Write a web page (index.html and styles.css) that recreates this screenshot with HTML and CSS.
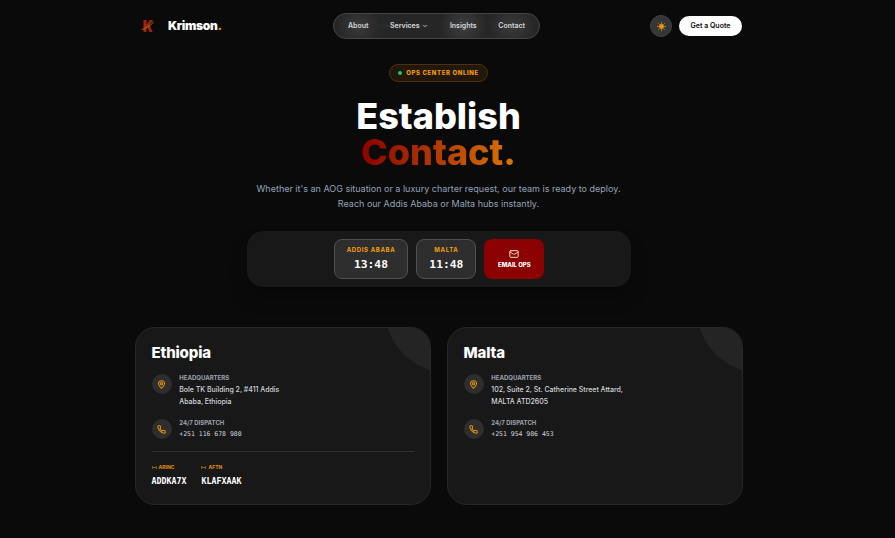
FILE: index.html
```
<!DOCTYPE html>
<html lang="en">

<head>
    <meta charset="UTF-8">
    <title>Krimson | Contact</title>
    <link rel="stylesheet" href="styles.css">
</head>

<body>
    <svg class="sprite" aria-hidden="true">
        <symbol id="pin" viewBox="0 0 24 24">
            <path d="M20 10c0 6-8 12-8 12s-8-6-8-12a8 8 0 0 1 16 0Z" />
            <circle cx="12" cy="10" r="3" />
        </symbol>
        <symbol id="phone" viewBox="0 0 24 24">
            <path d="M22 16.9v3a2 2 0 0 1-2.2 2 19.8 19.8 0 0 1-8.6-3.1 19.5 19.5 0 0 1-6-6A19.8 19.8 0 0 1 2.1 4.2 2 2 0 0 1 4.1 2h3a2 2 0 0 1 2 1.7c.1 1 .4 1.9.7 2.8a2 2 0 0 1-.5 2.1L8.1 9.9a16 16 0 0 0 6 6l1.3-1.3a2 2 0 0 1 2.1-.4c.9.3 1.8.6 2.8.7a2 2 0 0 1 1.7 2Z" />
        </symbol>
        <symbol id="signal" viewBox="0 0 24 24">
            <path d="M3 7v10M21 7v10M7 12h4M14 12h3" />
        </symbol>
    </svg>

    <header class="navbar">
        <a class="brand">
            <svg class="logo" viewBox="0 0 14 14">
                <path class="logo-letter" d="M2.5 1h3v4.500L9 1h3.3L8.600 6l3 7H8.400L6.600 8.500 5.500 9.700V13h-3Z" />
                <path class="logo-swoosh" d="M1 10.500C5 9.500 9 7 12.500 3.200" />
            </svg>
            <span class="brand-name">Krimson<span class="dot">.</span></span>
        </a>
        <nav class="nav-links">
            <a>About</a>
            <a>Services <svg class="chevron" viewBox="0 0 24 24"><path d="m6 9 6 6 6-6" /></svg></a>
            <a>Insights</a>
            <a>Contact</a>
        </nav>
        <div class="nav-actions">
            <button class="theme-toggle">
                <svg viewBox="0 0 24 24">
                    <circle cx="12" cy="12" r="6.5" />
                    <path d="M12 1v3M12 20v3M1 12h3M20 12h3M4.200 4.200l2 2M17.800 17.800l2 2M4.200 19.800l2-2M17.800 6.200l2-2" />
                </svg>
            </button>
            <button class="quote-button">Get a Quote</button>
        </div>
    </header>

    <main>
        <section class="hero">
            <div class="status"><span class="status-dot"></span>OPS CENTER ONLINE</div>
            <h1>
                <span class="line">Establish</span>
                <span class="line gradient-text">Contact.</span>
            </h1>
            <p>Whether it's an AOG situation or a luxury charter request, our team is ready to deploy.<br>Reach our Addis Ababa or Malta hubs instantly.</p>
        </section>

        <section class="clock-bar">
            <div class="clock">
                <span class="clock-label">ADDIS ABABA</span>
                <span class="clock-time">13:48</span>
            </div>
            <div class="clock">
                <span class="clock-label">MALTA</span>
                <span class="clock-time">11:48</span>
            </div>
            <a class="email-button">
                <svg viewBox="0 0 24 24">
                    <rect x="2" y="4" width="20" height="16" rx="2" />
                    <path d="m22 7-8.970 5.700a1.940 1.940 0 0 1-2.060 0L2 7" />
                </svg>
                <span>EMAIL OPS</span>
            </a>
        </section>

        <section class="offices">
            <article class="card">
                <h2>Ethiopia</h2>
                <div class="contact-row">
                    <span class="icon"><svg viewBox="0 0 24 24"><use href="#pin" /></svg></span>
                    <div>
                        <h3>HEADQUARTERS</h3>
                        <p>Bole TK Building 2, #411 Addis<br>Ababa, Ethiopia</p>
                    </div>
                </div>
                <div class="contact-row">
                    <span class="icon"><svg viewBox="0 0 24 24"><use href="#phone" /></svg></span>
                    <div>
                        <h3>24/7 DISPATCH</h3>
                        <p class="phone">+251 116 678 980</p>
                    </div>
                </div>
                <div class="codes">
                    <div>
                        <h4><svg viewBox="0 0 24 24"><use href="#signal" /></svg>ARINC</h4>
                        <p>ADDKA7X</p>
                    </div>
                    <div>
                        <h4><svg viewBox="0 0 24 24"><use href="#signal" /></svg>AFTN</h4>
                        <p>KLAFXAAK</p>
                    </div>
                </div>
            </article>

            <article class="card">
                <h2>Malta</h2>
                <div class="contact-row">
                    <span class="icon"><svg viewBox="0 0 24 24"><use href="#pin" /></svg></span>
                    <div>
                        <h3>HEADQUARTERS</h3>
                        <p>102, Suite 2, St. Catherine Street Attard,<br>MALTA ATD2605</p>
                    </div>
                </div>
                <div class="contact-row">
                    <span class="icon"><svg viewBox="0 0 24 24"><use href="#phone" /></svg></span>
                    <div>
                        <h3>24/7 DISPATCH</h3>
                        <p class="phone">+251 954 986 453</p>
                    </div>
                </div>
            </article>
        </section>
    </main>
</body>

</html>
```
FILE: styles.css
```
* {
    box-sizing: border-box;
    margin: 0;
    padding: 0;
}

body {
    width: 878px;
    height: 538px;
    font-family: 'Inter', sans-serif;
    color: #fff;
    overflow: hidden;
}

html {
    background-color: #0a0a0a;
}

svg {
    fill: none;
    stroke: currentColor;
    stroke-width: 2;
    stroke-linecap: round;
    stroke-linejoin: round;
}

.sprite {
    display: none;
}

.navbar {
    display: grid;
    grid-template-columns: 197px 207px 1fr;
    align-items: center;
    height: 52px;
    padding: 0 136px;
}

.brand {
    display: flex;
    align-items: center;
    gap: 13px;
    padding-left: 5px;
}

.logo {
    width: 14px;
    height: 14px;
    stroke: none;
}

.logo-letter {
    fill: #a3230c;
}

.logo-swoosh {
    stroke: #b8792c;
    stroke-width: 0.8;
}

.brand-name {
    margin-top: -1px;
    font-size: 12px;
    font-weight: 900;
    letter-spacing: -0.3px;
}

.dot {
    color: #f59e0b;
}

.nav-links {
    display: flex;
    align-items: center;
    justify-content: space-between;
    width: 207px;
    height: 26px;
    padding: 0 14px 1px;
    border: 1px solid #454545;
    border-radius: 13px;
    background: radial-gradient(circle at 12% 50%, #3a3a3a, transparent 22px),
        radial-gradient(ellipse at 35% 50%, #383838, transparent 30px),
        radial-gradient(circle at 63% 50%, #3e3e3e, transparent 24px),
        radial-gradient(circle at 87% 50%, #3a3a3a, transparent 24px),
        #262626;
    color: #d1d5db;
    font-size: 7px;
    font-weight: 600;
}

.chevron {
    width: 6px;
    height: 6px;
    margin-left: 1px;
    vertical-align: -1px;
    stroke-width: 3;
}

.nav-actions {
    display: flex;
    align-items: center;
    justify-content: flex-end;
    gap: 7px;
}

.theme-toggle {
    display: flex;
    align-items: center;
    justify-content: center;
    width: 22px;
    height: 22px;
    border: 1px solid #414141;
    border-radius: 50%;
    background-color: #363636;
    color: #e8960f;
}

.theme-toggle svg {
    width: 9px;
    height: 9px;
}

.theme-toggle circle {
    fill: currentColor;
    stroke: none;
}

.quote-button {
    width: 63px;
    height: 20px;
    padding-bottom: 1px;
    border: none;
    border-radius: 10px;
    background-color: #fff;
    color: #0a0a0a;
    font-family: inherit;
    font-size: 7px;
    font-weight: 600;
}

.hero {
    display: flex;
    flex-direction: column;
    align-items: center;
    padding-top: 12px;
    padding-right: 1px;
    text-align: center;
}

.status {
    display: flex;
    align-items: center;
    gap: 4px;
    height: 18px;
    padding: 0 8px 1px;
    border: 1px solid #50300c;
    border-radius: 9px;
    background-color: #21170a;
    color: #f59e0b;
    font-size: 6px;
    font-weight: 800;
    letter-spacing: 0.6px;
}

.status-dot {
    width: 4px;
    height: 4px;
    border-radius: 50%;
    background-color: #22c55e;
}

.hero h1 {
    margin-top: 16px;
    font-size: 36px;
    font-weight: 800;
    line-height: 36px;
}

.line {
    display: block;
    width: fit-content;
    height: 36px;
    margin: 0 auto;
}

.gradient-text {
    background: linear-gradient(90deg, #8b0000, #d97706);
    background-clip: text;
    -webkit-background-clip: text;
    color: transparent;
}

.hero p {
    margin-top: 11px;
    color: #94a3b8;
    font-size: 9px;
    line-height: 15px;
}

.clock-bar {
    display: flex;
    align-items: center;
    justify-content: center;
    gap: 8px;
    width: 384px;
    height: 56px;
    margin: 20px auto 40px;
    border-radius: 16px;
    background-color: #181818;
    box-shadow: 0 12px 20px -4px rgba(0, 0, 0, 0.35);
}

.clock {
    display: flex;
    flex-direction: column;
    align-items: center;
    height: 40px;
    padding: 6px 12px 0;
    border: 1px solid #505050;
    border-radius: 8px;
    background-color: #2e2e2e;
}

.clock-label {
    color: #f59e0b;
    font-size: 6px;
    font-weight: 700;
    line-height: 8px;
    letter-spacing: 0.65px;
}

.clock-time {
    margin-top: 4px;
    font-family: 'DejaVu Sans Mono', monospace;
    font-size: 11.3px;
    font-weight: 700;
    line-height: 14px;
}

.email-button {
    display: flex;
    flex-direction: column;
    align-items: center;
    width: 60px;
    height: 40px;
    padding-top: 10px;
    border-radius: 8px;
    background-color: #8b0000;
    font-size: 6px;
    font-weight: 800;
    line-height: 8px;
    letter-spacing: -0.02px;
}

.email-button svg {
    width: 10px;
    height: 10px;
    margin-bottom: 2px;
    stroke: #f3d9b8;
    stroke-width: 2.4;
}

.offices {
    display: grid;
    grid-template-columns: 296px 296px;
    gap: 16px;
    justify-content: center;
}

.card {
    position: relative;
    height: 178px;
    padding: 16px 16px 16px 15.5px;
    border: 1px solid #272727;
    border-radius: 20px;
    background-color: #181818;
    overflow: hidden;
}

/* quarter circle in the corner */
.card::after {
    content: '';
    position: absolute;
    top: -83px;
    right: -83px;
    width: 128px;
    height: 128px;
    border-radius: 50%;
    background-color: #242424;
}

.card h2 {
    margin-bottom: 10px;
    font-size: 15px;
    font-weight: 800;
    line-height: 18px;
    letter-spacing: -0.15px;
}

.contact-row {
    display: flex;
    gap: 7.800px;
    margin-bottom: 9px;
}

.icon {
    display: flex;
    align-items: center;
    justify-content: center;
    width: 20px;
    height: 20px;
    margin-top: 2px;
    border-radius: 50%;
    background-color: #2e2e2e;
    color: #e0900b;
}

.icon svg {
    width: 9px;
    height: 9px;
    margin-right: 1px;
    stroke-width: 2.8;
}

.contact-row h3 {
    color: #9ca3af;
    font-size: 6px;
    font-weight: 700;
    line-height: 12px;
}

.contact-row p {
    color: #d1d5db;
    font-size: 7px;
    font-weight: 500;
    line-height: 12px;
    letter-spacing: -0.02px;
}

.contact-row .phone {
    font-family: 'DejaVu Sans Mono', monospace;
    font-size: 6.5px;
    line-height: 10px;
}

.codes {
    display: flex;
    gap: 15px;
    margin-top: 12px;
    padding-top: 11px;
    border-top: 1px solid #303030;
}

.codes h4 {
    display: flex;
    align-items: center;
    gap: 2px;
    color: #e0900b;
    font-size: 5px;
    font-weight: 700;
    line-height: 8px;
}

.codes svg {
    width: 5px;
    height: 5px;
    stroke-width: 3;
}

.codes p {
    margin-top: 4px;
    font-family: 'DejaVu Sans Mono', monospace;
    font-size: 8.3px;
    font-weight: 700;
    line-height: 12px;
}
```
